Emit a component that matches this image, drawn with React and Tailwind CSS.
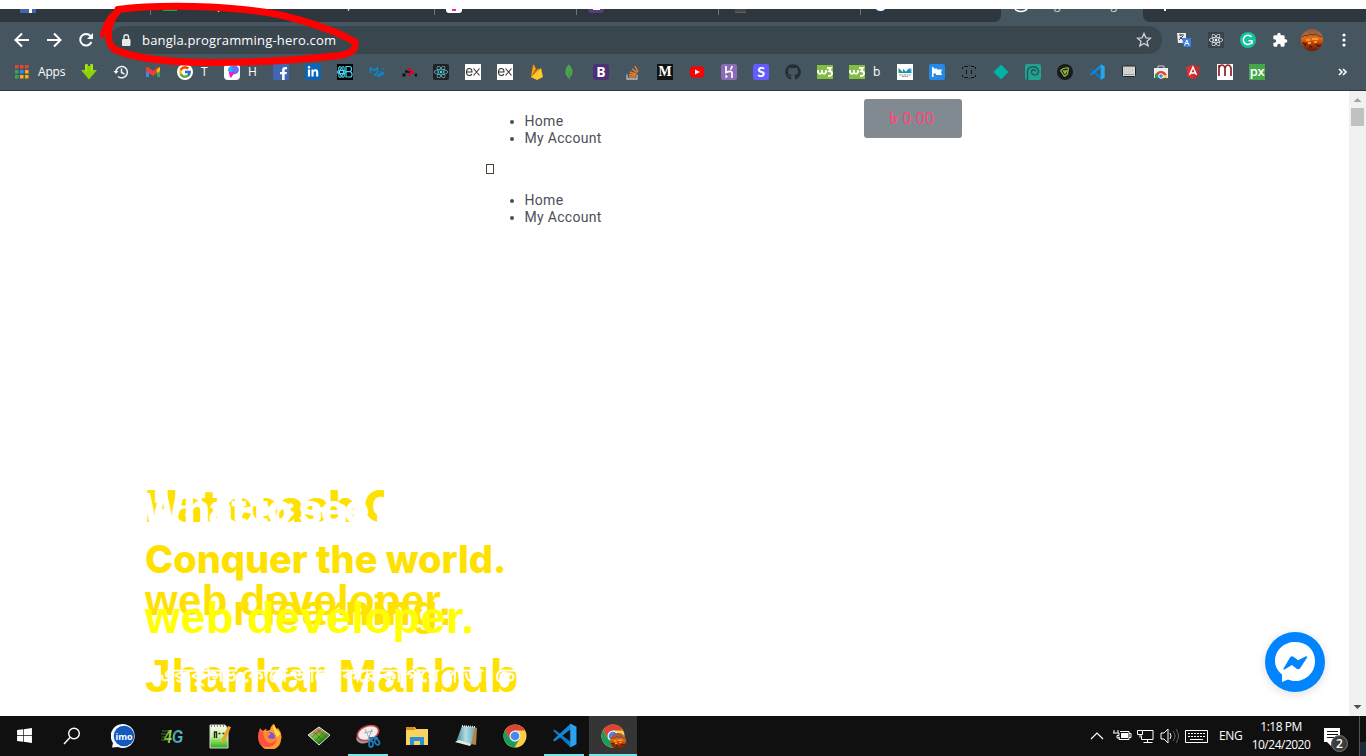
import React from "react";
import { FaReact, FaLinkedinIn, FaFacebookF, FaGithub, FaWindows } from "react-icons/fa";
import { FcGoogle } from "react-icons/fc";
import { SiMongodb } from "react-icons/si";

const UI = "font-['Open_Sans','Noto_Sans',sans-serif]";

function Tile({ className = "", children }) {
  return <span className={"flex h-4 w-4 items-center justify-center overflow-hidden rounded-[2px] leading-none " + className}>{children}</span>;
}

function VsCode({ size }) {
  return (
    <svg width={size} height={size} viewBox="0 0 24 24">
      <path d="M1 7.500 2.500 6.200 18 18v5.500z" fill="#0878c6" />
      <path d="M18 .5 1 16.300l1.500 1.500L18 6z" fill="#1289d8" />
      <path d="M17.500.5 23.500 3.500v17l-6 3z" fill="#29a3ee" />
    </svg>
  );
}

function Chrome({ size }) {
  return (
    <svg width={size} height={size} viewBox="0 0 24 24">
      <circle cx="12" cy="12" r="11.500" fill="#fdd043" />
      <path d="M2 6.300A11.500 11.500 0 0 1 22 6.500H12L7 14.800z" fill="#db4437" />
      <path d="M2 6.300A11.500 11.500 0 0 0 11.500 23.500L16.800 14.700 12 17.500 7.200 15z" fill="#1a9d5a" />
      <circle cx="12" cy="12" r="5.500" fill="#f1f1f1" />
      <circle cx="12" cy="12" r="4.300" fill="#4b87ee" />
    </svg>
  );
}

function Sunset({ size }) {
  return (
    <svg width={size} height={size} viewBox="0 0 22 22">
      <defs>
        <linearGradient id="sunset" x1="0" x2="0" y1="0" y2="1">
          <stop offset="0" stopColor="#8b5541" /><stop offset=".3" stopColor="#b66c3a" /><stop offset=".43" stopColor="#e96912" />
          <stop offset=".65" stopColor="#b93f08" /><stop offset="1" stopColor="#5e1d08" />
        </linearGradient>
      </defs>
      <circle cx="11" cy="11" r="11" fill="url(#sunset)" />
      <path d="M1 8q3-3 5-1l3-2 3 1 3-1 3 2 3 1" stroke="#703219" fill="none" />
      <path d="M5 11h4m2-1h6M7 14h3m3-1h3" stroke="#ff9a24" strokeWidth="2" />
      <path d="M2 14l3 1-1 2m4 0 3 1m4-3 2 2 3-1" stroke="#4b1a0b" strokeWidth="1.500" fill="none" />
    </svg>
  );
}

function W3() {
  return (
    <Tile className="h-[14px] rounded-none bg-[#83bf3f]">
      <svg width="16" height="16" viewBox="0 0 16 16" fill="none" stroke="white" strokeWidth="1.800"><path d="M1 6v2.500q2 2.500 4 0V6v2.500q2 2.500 4 0V6M10 4h4l-2 3q3 0 3 2.500T11 12" /></svg>
    </Tile>
  );
}

function Express() {
  return (
    <Tile className="rounded-none bg-white">
      <svg width="16" height="16" viewBox="0 0 16 16" fill="none" stroke="#333" strokeWidth="1.100">
        <path d="M1.500 8H7q0-3.500-2.700-3.500T1.500 8q0 3.500 2.800 3.500 1.900 0 2.500-1.500M8.500 4.500l6 7m0-7-6 7" />
      </svg>
    </Tile>
  );
}

const bookmarks = [
  { el: <svg width="16" height="16" viewBox="0 0 16 16"><path d="M4 0h3v2h2V0h3v6h4L8 15.500 0 6h4z" fill="#8ed300" /><path d="M5 1v6m6-6v6" stroke="#c0f53c" /></svg> },
  { el: <svg width="16" height="16" viewBox="0 0 16 16" fill="none" stroke="#f1f3f4" strokeWidth="1.500"><path d="M3 8.500A5.700 5.700 0 1 1 5 12.500M8.500 4.500V8.500l3 1.600" /><path d="M.5 7h5L3 10z" fill="#f1f3f4" stroke="none" /></svg> },
  { el: <svg width="16" height="16" viewBox="0 0 16 16"><path d="M1 4v9h3V7z" fill="#4285f4" /><path d="M15 4v9h-3V7z" fill="#34a853" /><path d="M1 3.500 3 3l5 4 5-4 2 1v3l-7 5-7-5z" fill="#ea4335" /><path d="M12 5.500 15 3v4l-3 2z" fill="#fbbc04" /></svg> },
  { el: <Tile className="rounded-full bg-white"><FcGoogle size={14} /></Tile>, label: "T" },
  { el: <Tile className="-ml-px rounded-[4px] bg-white"><svg width="16" height="16" viewBox="0 0 16 16"><path d="M4 6a4 4 0 0 1 5-4l2 5-5 4z" fill="#29a8ff" /><path d="M8 2a4.500 4.500 0 1 1 1 8z" fill="#6a6df5" /><path d="M5 8h6l-4 6q-2-2-2-6" fill="#f31ac3" /></svg></Tile>, label: "H" },
  { el: <Tile className="bg-[#4267b2] text-white"><FaFacebookF size={13} className="translate-x-[2px] translate-y-[2px]" /></Tile> },
  { el: <Tile className="bg-[#0a66b7] text-white"><FaLinkedinIn size={12} /></Tile> },
  { el: <Tile className="rounded-none bg-black"><svg width="16" height="16" viewBox="0 0 16 16" fill="none" stroke="#4bd3ee" strokeWidth="1.200"><path d="M9 2.500h3.500q2 0 2 2.500t-2 2.700q2.500 0 2.500 2.800t-2.500 2.500H9zM9 7.700h3.500" /><ellipse cx="4.500" cy="8" rx="4" ry="1.700" /><ellipse cx="4.500" cy="8" rx="2" ry="5.500" transform="rotate(-20 4.500 8)" /><ellipse cx="4.500" cy="8" rx="2" ry="5.500" transform="rotate(20 4.500 8)" /></svg></Tile> },
  { el: <svg width="16" height="16" viewBox="0 0 16 16" fill="none" stroke="#0d86cf" strokeWidth="1.600"><path d="M1.500 9V4L5 6.500 8.500 4v5L5 11.500M8 12.500l4-2.500V7M9.500 12.500l4.500-2.500V8m0-2.500V4" /></svg> },
  { el: <svg width="16" height="16" viewBox="0 0 16 16"><path d="m7 4.500 5 3.500-5 3.500" fill="none" stroke="#de002c" strokeWidth="2.200" /><g fill="#111"><circle cx="3" cy="11" r="1.700" /><circle cx="15" cy="11" r="1.500" /><circle cx="5.500" cy="7.500" r="1.500" /><circle cx="8" cy="8" r="1" /></g></svg> },
  { el: <Tile className="bg-[#222] text-[#5fcce5]"><FaReact size={14} /></Tile> },
  { el: <Express /> },
  { el: <Express /> },
  { el: <svg width="16" height="16" viewBox="0 0 16 16"><path d="M2 13 4 1q.5-.8 1 0l2 4z" fill="#ffa000" /><path d="m2 13 7-9 2 3-8 7z" fill="#f57c00" /><path d="m2 13 10-9 2 9-6 3z" fill="#ffca28" /></svg> },
  { el: <SiMongodb size={16} color="#4aa64c" /> },
  { el: <Tile className="rounded-[3px] bg-[#4d2f78] text-[14px] font-bold text-white">B</Tile> },
  { el: <svg width="16" height="16" viewBox="0 0 16 16" fill="none"><path d="M2 10.500V15h10v-4.500" stroke="#b8bec2" strokeWidth="1.300" /><path d="M4 13h6.500M4 10.500l6.500.8M5 8l6 2.200M7 4.800l5 4M10 2l3 6" stroke="#f48024" strokeWidth="1.400" /></svg> },
  { el: <Tile className="rounded-none bg-[#111] font-['Liberation_Serif'] text-[14px] font-bold text-white">M</Tile> },
  { el: <svg width="16" height="16" viewBox="0 0 16 16"><rect x="1" y="2.500" width="14" height="11" rx="3" fill="#f00" /><path d="m6 5.500 5 2.500-5 2.500z" fill="white" /></svg> },
  { el: <Tile className="bg-[#8b6cb4]"><svg width="16" height="16" viewBox="0 0 16 16" fill="none" stroke="white" strokeWidth="1.700"><path d="M5 2v6.500q6-2.500 6 .5v5M11 2q0 2-1.500 3.500" /><path d="m4.500 10.500 2.500 2-2.500 2z" fill="white" stroke="none" /></svg></Tile> },
  { el: <Tile className="bg-[#635bff] font-['Lato'] text-[14px] font-black text-white">S</Tile> },
  { el: <FaGithub size={16} color="#252d32" /> },
  { el: <W3 /> },
  { el: <W3 />, label: "b" },
  { el: <Tile className="rounded-none bg-white"><svg width="16" height="16" viewBox="0 0 16 16"><path d="M1.500 4v5H7z" fill="#179c82" /><path d="m6 9V5l3 3 3-3.500L14.500 9z" fill="#138fbe" /><path d="M6 9V5l3 3 3-3.500 2.500 4.500z" fill="#138fbe" /><path d="M12 4.500h2.500V9z" fill="#2baede" /><path d="M2 11h12M5 12.500h6" stroke="#999" strokeDasharray="2 .5" /></svg></Tile> },
  { el: <Tile className="bg-[#2489e8]"><svg width="16" height="16" viewBox="0 0 16 16" fill="white"><path d="M3 3h1.500v1.500H8v1h5L12 8l1 3H7V9.500H4.500V13H3z" /></svg></Tile> },
  { el: <svg width="16" height="16" viewBox="0 0 16 16" fill="none" stroke="#11171a"><path d="M1.500 5V3M3 2.500h4M8 1.500h1M10 2.500h3.500M14.500 3v2M1.500 11v2M3 13.500h4M8 14.500h1M10 13.500h3.500M14.500 11v2M5.500 6v4M10.500 6v4" /></svg> },
  { el: <svg width="16" height="16" viewBox="0 0 16 16"><path d="m8 .5 7.500 7.500L8 15.500.5 8z" fill="#00b3a4" /></svg> },
  { el: <Tile className="bg-[#1da593]"><svg width="16" height="16" viewBox="0 0 16 16" fill="none" stroke="#31515b" strokeWidth="1.400"><path d="M2.500 16V8c0-7 11-6.500 11-1 0 5-7 5-7 1 0-3 4-3 4-.5" /></svg></Tile> },
  { el: <Tile className="rounded-full bg-[#1a1a1a]"><svg width="16" height="16" viewBox="0 0 16 16" fill="none" stroke="#8fbb3f" strokeWidth="1.300"><path d="M3.500 6.500q3-3 8-2.500M3.500 6.500l4 6M11.500 4l-1 6-3 2.500M6.500 7h3L8 9.500z" /></svg></Tile> },
  { el: <VsCode size={16} /> },
  { el: <svg width="16" height="16" viewBox="0 0 16 16"><rect x="1.500" y="2" width="13" height="10.500" rx="1" fill="#d7d7d7" stroke="#242424" /><path d="M3 4h10M3 6h10M3 8h10" stroke="#bbb" strokeDasharray="1 1" /><path d="M3 10.500h10" stroke="#999" /></svg> },
  { el: <svg width="16" height="16" viewBox="0 0 16 16"><path d="M5 4V2h6v2" fill="none" stroke="#ccc" /><path d="M1 4h14v10H1z" fill="#eee" /><path d="M2 14a6 6 0 0 1 12-2H8z" fill="#dc4437" /><path d="M2 14a6 6 0 0 1 1-5l4 5z" fill="#16a05d" /><path d="M9 14h5v-3H8z" fill="#fdcd3d" /><circle cx="8" cy="12" r="2.300" fill="#3e82f1" stroke="white" /></svg> },
  { el: <svg width="16" height="16" viewBox="0 0 16 16"><path d="m8 .7 6.700 2.400-1 9L8 15.500l-5.700-3.400-1-9z" fill="#dd2f36" /><path d="m8 .7 6.700 2.400-1 9L8 15.500z" fill="#bd2a31" /><path d="m4.500 11 3.500-8 3.500 8M6 9h4" fill="none" stroke="white" strokeWidth="1.500" /></svg> },
  { el: <Tile className="rounded-none bg-white"><svg width="16" height="16" viewBox="0 0 16 16"><path d="M2 12V1m0 3q1-3 3-3t3 3v8m0-8q1-3 3-3t3 3v8" fill="none" stroke="#922025" strokeWidth="1.700" /></svg></Tile> },
  { el: <Tile className="rounded-none bg-[#46a64a] text-[13px] font-semibold tracking-[-0.500px] text-white">px</Tile> },
];

const taskIcons = [
  { el: <FaWindows size={17} color="white" /> },
  { el: <svg width="18" height="18" viewBox="0 0 18 18" fill="none" stroke="white" strokeWidth="1.400" className="-ml-[3px]"><circle cx="11" cy="6.500" r="5.300" /><path d="M7 10.500 1 17" /></svg> },
  { el: <svg width="26" height="26" viewBox="0 0 26 26" className="ml-[3px]"><path d="M2 20A12 12 0 1 1 7 24l-6 .5z" fill="#f5f9ff" /><circle cx="13" cy="13" r="10.300" fill="#1459bd" /><text x="13" y="16.500" textAnchor="middle" fontFamily="Open Sans" fontWeight="700" fontSize="9" fill="white">imo</text></svg> },
  { el: <svg width="26" height="20" viewBox="0 0 26 20" className="ml-px"><defs><linearGradient id="fourg"><stop stopColor="#4ca01e" /><stop offset=".4" stopColor="#a9d957" /><stop offset=".6" stopColor="#3b9fb7" /><stop offset="1" stopColor="#5ec3d6" /></linearGradient></defs><text x="5" y="16.500" textLength="19" lengthAdjust="spacingAndGlyphs" fontFamily="Liberation Sans" fontStyle="italic" fontWeight="700" fontSize="19" fill="url(#fourg)">4G</text><path d="M3 5h8M2 8h7M3 11h4M2 14h7" stroke="#689f21" opacity=".7" /></svg> },
  { el: <svg width="24" height="26" viewBox="0 0 24 26"><defs><linearGradient id="npp" x1="0" x2="0" y1="0" y2="1"><stop stopColor="#fbfcf6" /><stop offset=".5" stopColor="#c5f393" /><stop offset="1" stopColor="#29ad16" /></linearGradient></defs><path d="M2 2h15l3 4v19H2z" fill="url(#npp)" stroke="#d6d9d4" /><path d="M3 3h15" stroke="#888" strokeDasharray="1 2" strokeWidth="2" /><path d="M6.500 15V9h2v6m2-4.500h2m2 0h2" stroke="#222" fill="none" strokeWidth="1.400" /><path d="m20 3 3 1-6 14-3 2v-4z" fill="#e9a326" /></svg> },
  { el: <svg width="26" height="26" viewBox="0 0 26 26" className="ml-[2px]"><path d="M3 5q1 2 3 3 2-2 4-2l-1 2 4-1q1-5 4-6 0 3 3 5l1-1q5 6 3 12a11 11 0 0 1-22-2Q2 9 3 5" fill="#ff9930" /><path d="M3 6q1 3 4 3-2 3 2 5l2 5q6 2 9-4-1 8-8 9Q1 25 1 14q0-5 2-8" fill="#ff5040" /><circle cx="13" cy="14" r="5" fill="#7758d9" /><path d="M7 10q5-2 7 1l-3 2q0 3 5 3 3-1 3-5 2 8-6 9-5-1-6-6" fill="#ff8630" /><path d="M17 1q2 6 6 9-1 4-3 4-3-5-4-9z" fill="#ffdf42" /></svg> },
  { el: <svg width="24" height="20" viewBox="0 0 24 20"><defs><linearGradient id="diamond" x1="0" x2=".8" y1="0" y2="1"><stop stopColor="#eee2dd" /><stop offset=".25" stopColor="#c3a877" /><stop offset=".5" stopColor="#66bf32" /><stop offset="1" stopColor="#004600" /></linearGradient></defs><path d="m12 1 11 8-11 10L1 9z" fill="url(#diamond)" /><path d="m12 1-8 7h16z" fill="#ca6a4e" opacity=".45" /><path d="m6 5 10 10M9 3l11 8M18 5 8 15M15 3 5 11" stroke="#334313" strokeWidth=".4" /><path d="m12 1 11 8-11 10L1 9z" fill="none" stroke="#e6e6e6" /></svg> },
  { on: true, el: <svg width="26" height="24" viewBox="0 0 26 24"><ellipse cx="10" cy="13" rx="9" ry="6" fill="#999" transform="rotate(-20 10 13)" /><ellipse cx="13" cy="9" rx="11" ry="7" fill="#eee" stroke="#c84246" strokeWidth="1.500" transform="rotate(-20 13 9)" /><path d="m10 5 5 11m2-11-4 11m-4-7 9-2" stroke="#aaa" fill="none" /><g fill="none" stroke="#197cba" strokeWidth="1.800"><ellipse cx="16" cy="20" rx="2" ry="3" /><ellipse cx="22" cy="18" rx="2" ry="3" transform="rotate(-35 22 18)" /><path d="M14 14h9m-7 3 2-4" /></g></svg> },
  { el: <svg width="24" height="20" viewBox="0 0 24 20"><path d="M1 1h9l1 2h12v16H1z" fill="#f9d261" /><path d="M1 1h8l1 3H1z" fill="#d99012" /><path d="M5 11h14v8h-4v-4H9v4H5z" fill="#2b90d9" /></svg> },
  { el: <svg width="24" height="24" viewBox="0 0 24 24"><defs><linearGradient id="notes"><stop stopColor="#3f8391" /><stop offset=".5" stopColor="#b0dce2" /><stop offset="1" stopColor="#72a5af" /></linearGradient></defs><path d="m20 3 3 1-1 17-5-1z" fill="#b28443" /><path d="m8 2 13 1-4 18-15-3z" fill="url(#notes)" /><path d="m1 18 4-2 12 4-1 2z" fill="#e4e8e6" /><path d="m8 2 13 1" stroke="#ddd" strokeWidth="2" strokeDasharray="1 1" /></svg> },
  { el: <Chrome size={24} /> },
  { on: true, el: <VsCode size={25} /> },
  { on: true, active: true, el: <span className="relative"><Chrome size={24} /><span className="absolute top-[9px] left-[9px]"><Sunset size={16} /></span></span> },
];

function TabStrip() {
  return (
    <div className="flex h-[13px] shrink-0 overflow-hidden bg-[#455660]">
      <div className="flex h-full w-[1001px] items-start rounded-br-[7px] bg-[#2d373d]">
        <div className="ml-5 flex h-1 w-4 justify-center bg-[#4267b2]"><i className="ml-1 h-full w-[3px] bg-white" /></div>
        <i className="ml-[114px] h-[6px] w-px bg-[#6b777e]" />
        <i className="ml-3 h-[2px] w-[14px] bg-[#00b83c]" />
        <div className={"ml-[14px] h-1 w-[220px] overflow-hidden text-[12px] text-white " + UI}><div className="mt-[-12px] whitespace-pre leading-4">Company                                 ,</div></div>
        <i className="ml-[23px] h-[6px] w-px bg-[#6b777e]" />
        <div className="ml-[11px] flex h-1 w-4 justify-center rounded-b-[3px] bg-white"><i className="h-[2px] w-1 bg-[#f31ac3]" /></div>
        <i className="ml-[114px] h-[6px] w-px bg-[#6b777e]" />
        <div className="ml-[11px] flex h-1 w-4 justify-center rounded-b-[3px] bg-[#563d7c]"><i className="h-px w-[7px] bg-white" /></div>
        <i className="ml-[114px] h-[6px] w-px bg-[#6b777e]" />
        <i className="ml-4 h-1 w-[11px] border-b border-[#626262] bg-[#444b4f]" />
        <i className="ml-[114px] h-[6px] w-px bg-[#6b777e]" />
        <svg width="15" height="4" viewBox="0 0 15 4" className="ml-3"><path d="M1 0h13q-2 3-6.500 3T1 0" fill="#283a82" /><path d="M3 0h9q-1 2-4.500 2T3 0" fill="white" /></svg>
      </div>
      <div className="flex w-[142px]">
        <svg width="14" height="4" viewBox="0 0 14 4" className="ml-[13px]"><path d="M1 0q2 2.500 6 2.500T13 0" fill="none" stroke="white" strokeWidth="1.500" /></svg>
        <div className={"ml-[23px] h-[3px] w-20 overflow-hidden text-[12px] text-[#cfd4d7] " + UI}><div className="mt-[-12px] whitespace-pre leading-4"> g                g</div></div>
      </div>
      <div className="flex-1 rounded-bl-[7px] bg-[#2d373d]"><div className="ml-[21px] h-[2px] w-[2px] bg-white" /></div>
    </div>
  );
}

function Toolbar() {
  return (
    <div className="flex h-9 shrink-0 items-center bg-[#455660]">
      <svg width="110" height="36" viewBox="0 0 110 36" fill="none" stroke="white" strokeWidth="2">
        <path d="M29 18H16m6-6.500L15.500 18l6.500 6.500M47 18h13m-6-6.500 6.500 6.500-6.500 6.500" />
        <path d="M90.500 14a5.800 5.800 0 1 0 .9 6" /><path d="M93 11v6h-6z" fill="white" stroke="none" />
      </svg>
      <div className="flex h-7 w-[1052px] items-center rounded-full bg-[#39464e]">
        <svg width="10" height="13" viewBox="0 0 10 13" className="ml-[11px]"><rect x="1" y="5" width="8.500" height="7" rx="1" fill="#e8eaed" /><path d="M3 5V3a2.200 2.200 0 0 1 4.500 0v2" fill="none" stroke="#e8eaed" strokeWidth="1.400" /></svg>
        <span className={"ml-[11px] w-[196px] whitespace-nowrap pt-px text-[13px] tracking-[0.180px] text-white " + UI}>bangla.programming-hero.com</span>
        <svg width="16" height="16" viewBox="0 0 16 16" fill="none" stroke="#cfd4d7" strokeWidth="1.300" className="ml-[798px]"><path d="m8 1.500 1.900 4.300 4.700.4-3.600 3.100 1.100 4.600L8 11.500l-4.100 2.400L5 9.300 1.400 6.200l4.700-.4z" /></svg>
      </div>
      <div className="ml-[14px] flex items-center">
        <svg width="16" height="16" viewBox="0 0 16 16"><path d="M1 1h9v10H2z" fill="#eee" /><path d="M3 3h5M5 2v2m-2 4 4-4m-3 1 3 3" stroke="#444" fill="none" /><path d="M6 6h9v9H8z" fill="#3c7de6" /><path d="m8.500 13.500 2.300-5.500 2.300 5.500m-4-2h3" stroke="white" fill="none" /></svg>
        <Tile className="ml-4 rounded-none bg-[#38444b] text-white"><FaReact size={14} /></Tile>
        <Tile className="ml-4 rounded-full bg-[#15c39a]"><svg width="16" height="16" viewBox="0 0 16 16" fill="none" stroke="white" strokeWidth="1.500"><path d="M11.500 5a4.600 4.600 0 1 0 .5 5V8.700H8.500m3.500 0v3" /></svg></Tile>
        <svg width="16" height="16" viewBox="0 0 24 24" className="ml-4" fill="white"><path d="M20.500 11H19V7a2 2 0 0 0-2-2h-4V3.500a2.500 2.500 0 0 0-5 0V5H4a2 2 0 0 0-2 2v3.800h1.500a2.700 2.700 0 0 1 0 5.400H2V20a2 2 0 0 0 2 2h3.800v-1.500a2.700 2.700 0 0 1 5.400 0V22H17a2 2 0 0 0 2-2v-4h1.500a2.500 2.500 0 0 0 0-5" /></svg>
        <div className="ml-[13px]"><Sunset size={22} /></div>
        <svg width="4" height="16" className="ml-[19px]" fill="white"><circle cx="2" cy="3" r="1.600" /><circle cx="2" cy="8" r="1.600" /><circle cx="2" cy="13" r="1.600" /></svg>
      </div>
    </div>
  );
}

function Bookmarks() {
  return (
    <div className={"flex h-[33px] shrink-0 items-center border-b border-[#2d3940] bg-[#455660] pb-[5px] text-white " + UI}>
      <svg width="14" height="14" className="ml-[15px]">
        {["#ea4335", "#ea4335", "#ea4335", "#34a853", "#2a8cf3", "#fbae17", "#34a853", "#fbae17", "#fbae17"].map((c, i) => <rect key={i} x={(i % 3) * 5} y={Math.floor(i / 3) * 5} width="3.500" height="3.500" fill={c} />)}
      </svg>
      <span className="ml-[9px] w-[35px] text-[12px] tracking-[-0.200px]">Apps</span>
      <div className="ml-2 flex items-center">
        {bookmarks.map((b, i) => (
          <div key={i} className={b.label ? "flex w-12 items-center" : "flex w-8 items-center"}>
            {b.el}{b.label && <span className="ml-2 text-[12px]">{b.label}</span>}
          </div>
        ))}
      </div>
      <svg width="10" height="8" viewBox="0 0 10 8" fill="none" stroke="white" strokeWidth="1.600" className="ml-[57px]"><path d="m1 1 3 3-3 3m4-6 3 3-3 3" /></svg>
    </div>
  );
}

function Menu() {
  return (
    <ul className="list-disc pl-10 font-['Roboto',sans-serif] text-[14px] leading-[17px] tracking-[0.300px] text-[#4b4f58]">
      <li>Home</li>
      <li>My Account</li>
    </ul>
  );
}

function Hero() {
  return (
    <div className="absolute top-[398px] left-[145px] h-[220px] w-[372px] whitespace-nowrap leading-none text-[#ffe100]">
      <div className="absolute top-0 left-0 h-[35px] w-[239px] overflow-hidden font-['Inter'] font-extrabold">
        <span className="absolute top-[-5px] left-0 text-[44px] tracking-[-1px]">Hat coach C</span>
        <span className="absolute top-[-1px] left-[-4px] text-[42px] tracking-[-1.800px] text-white">What to see me</span>
      </div>
      <span className="absolute top-[51px] left-0 font-['Inter'] text-[38px] font-extrabold tracking-[-0.050px]">Conquer the world.</span>
      <span className="absolute top-[91px] left-0 font-['Liberation_Sans'] text-[42px] font-bold tracking-[0.350px]">web developer.</span>
      <span className="absolute top-[101px] left-[88px] font-['Liberation_Sans'] text-[42px] font-bold tracking-[1.500px]">r learning.</span>
      <span className="absolute top-[106px] left-0 font-['Liberation_Sans'] text-[45px] font-bold tracking-[0.500px] text-[#ffff00]">web developer.</span>
      <span className="absolute top-[163px] left-0 font-['Liberation_Sans'] text-[47px] font-bold">Jhankar Mahbub</span>
      <span className="absolute top-[177px] left-[-6px] h-8 w-[378px] overflow-hidden font-['Noto_Sans_Bengali','Noto_Sans',sans-serif] text-[19px] leading-6 text-white [-webkit-text-stroke:0.400px_white]">না এক্সকুসিভ কোর্সে আরো করে কাঁপিয়ে পড়ো। তোমার</span>
    </div>
  );
}

function Page() {
  return (
    <main className="flex h-[625px] shrink-0 bg-white">
      <section className="relative flex flex-1 items-start overflow-hidden">
        <nav className="mt-[22px] ml-[484.500px] w-[379.500px]">
          <Menu />
          <div className="flex h-[45px] items-center pb-[2px] pl-[1.500px]"><i className="h-[10px] w-2 border border-[#52413a]" /></div>
          <Menu />
        </nav>
        <button className="mt-2 h-[39px] w-[98px] rounded-[3px] bg-[#818a91] pr-[3px] font-['Roboto',sans-serif] text-[16px] tracking-[0.200px] text-[#ff4778]"><span className="text-[18px] leading-none [-webkit-text-stroke:0.400px_#ff4778]">৳</span> 0.00</button>
        <Hero />
        <svg width="100" height="100" viewBox="0 0 100 100" className="absolute top-[521px] left-[1245px] drop-shadow-[0_2px_5px_#0002]">
          <circle cx="50" cy="50" r="30" fill="#0084ff" />
          <path d="M50 30c-11 0-20 8-20 19 0 6 3 10 7 13.500v7.500l6-2.500c2 .8 4 1.500 7 1.500 11 0 20-8 20-20s-9-19-20-19" fill="white" />
          <path d="M38.500 56.500 45 45.500q1.500-2 3.500-.8l4.500 3.500 8-4q2-.3.8 1.700l-6.500 10q-1.500 2-3.700.8L47 53l-7.500 4.500q-1.500.5-1-1" fill="#0084ff" />
        </svg>
      </section>
      <aside className="flex w-[17px] flex-col items-center bg-[#f1f1f1]">
        <svg width="17" height="17"><path d="M4.500 11h8L8.500 7z" fill="#a3a3a3" /></svg>
        <i className="h-[18px] w-[13px] bg-[#c1c1c1]" />
        <svg width="17" height="17" className="mt-auto"><path d="M4.500 6h8l-4 4z" fill="#505050" /></svg>
      </aside>
    </main>
  );
}

function Taskbar() {
  return (
    <footer className={"flex h-10 shrink-0 bg-[#101010] text-white " + UI}>
      {taskIcons.map((t, i) => (
        <div key={i} className={(t.active ? "bg-[#353535] " : "") + "mr-[1.100px] flex w-12 flex-col items-center"}>
          <div className="flex h-[38px] items-center pt-px">{t.el}</div>
          {t.on && <i className={(t.active ? "w-12" : "w-10") + " h-[2px] bg-[#76e5ee]"} />}
        </div>
      ))}
      <svg width="132" height="40" viewBox="0 0 132 40" fill="none" stroke="white" className="ml-auto">
        <path d="m11 23 6-6 6 6" strokeWidth="1.200" />
        <path d="M40 15.500h9v8H39v-3m10-3h2v4h-2M34 14v3m4-3v3m-5 0h6v2.500h-2V22h3" /><path d="M41 17h7v5h-7z" fill="white" stroke="none" />
        <path d="M63 14.500h10v9H61.500v-4m6 4v3m-4 0h9M57.500 14.500h5v4h-5zm2.500 4v3" />
        <path d="M81 17h3l4-4v14l-4-4h-3z" /><path d="M90 17q2 3 0 6" /><path d="M93 15q4 5 0 10m3-12q5 7 0 14" stroke="#666" />
        <path d="M105.500 14.500h22v12h-22z" /><path d="M108 17.500h18M108 20.500h18" strokeDasharray="2 1" /><path d="M110 23.500h13" />
      </svg>
      <span className="ml-[7px] w-[24px] self-center text-[12px] tracking-[-0.400px]">ENG</span>
      <div className="ml-[7px] w-[62px] pt-[2px] text-center text-[12px] leading-[18px] tracking-[-0.500px] whitespace-nowrap"><div>1:18 PM</div><div>10/24/2020</div></div>
      <svg width="30" height="40" viewBox="0 0 30 40" className="ml-3">
        <path d="M0 12h16v14H7v4l-4-4H0z" fill="white" /><path d="M3 15.500h11M3 18.500h11M3 21.500h7" stroke="#111" />
        <circle cx="15.500" cy="27.500" r="8" fill="#3c3c3c" stroke="#777" /><text x="15.500" y="32" textAnchor="middle" fontSize="12" fontFamily="Open Sans" fontWeight="600" fill="white">2</text>
      </svg>
      <div className="flex w-3 items-end"><i className="ml-[5px] h-10 w-px bg-[#555]" /><i className="h-[14px] w-[6px] bg-[#222936]" /></div>
    </footer>
  );
}

export default function App() {
  return (
    <div className="relative flex h-[756px] w-[1366px] flex-col overflow-hidden bg-white">
      <div className="h-[9px] shrink-0" />
      <TabStrip />
      <Toolbar />
      <Bookmarks />
      <Page />
      <Taskbar />
      <svg width="380" height="80" viewBox="0 0 380 80" className="pointer-events-none absolute top-0 left-0" fill="none" stroke="#fe0000" strokeLinecap="round" strokeLinejoin="round">
        <path d="M102 36C104 25 109 15 119 9" strokeWidth="4" />
        <path d="M118 9.500C145 6 184 6 210 7C245 9 272 12 292 18C309 22 322 27 335 32C342 35 348 38 354 41.500" strokeWidth="7" />
        <path d="M118 11C106 24 106 42 114 49C132 58 168 62 205 62.500C258 63 308 59 340 55.500C354 53 356 48 355 42" strokeWidth="7" />
      </svg>
    </div>
  );
}
